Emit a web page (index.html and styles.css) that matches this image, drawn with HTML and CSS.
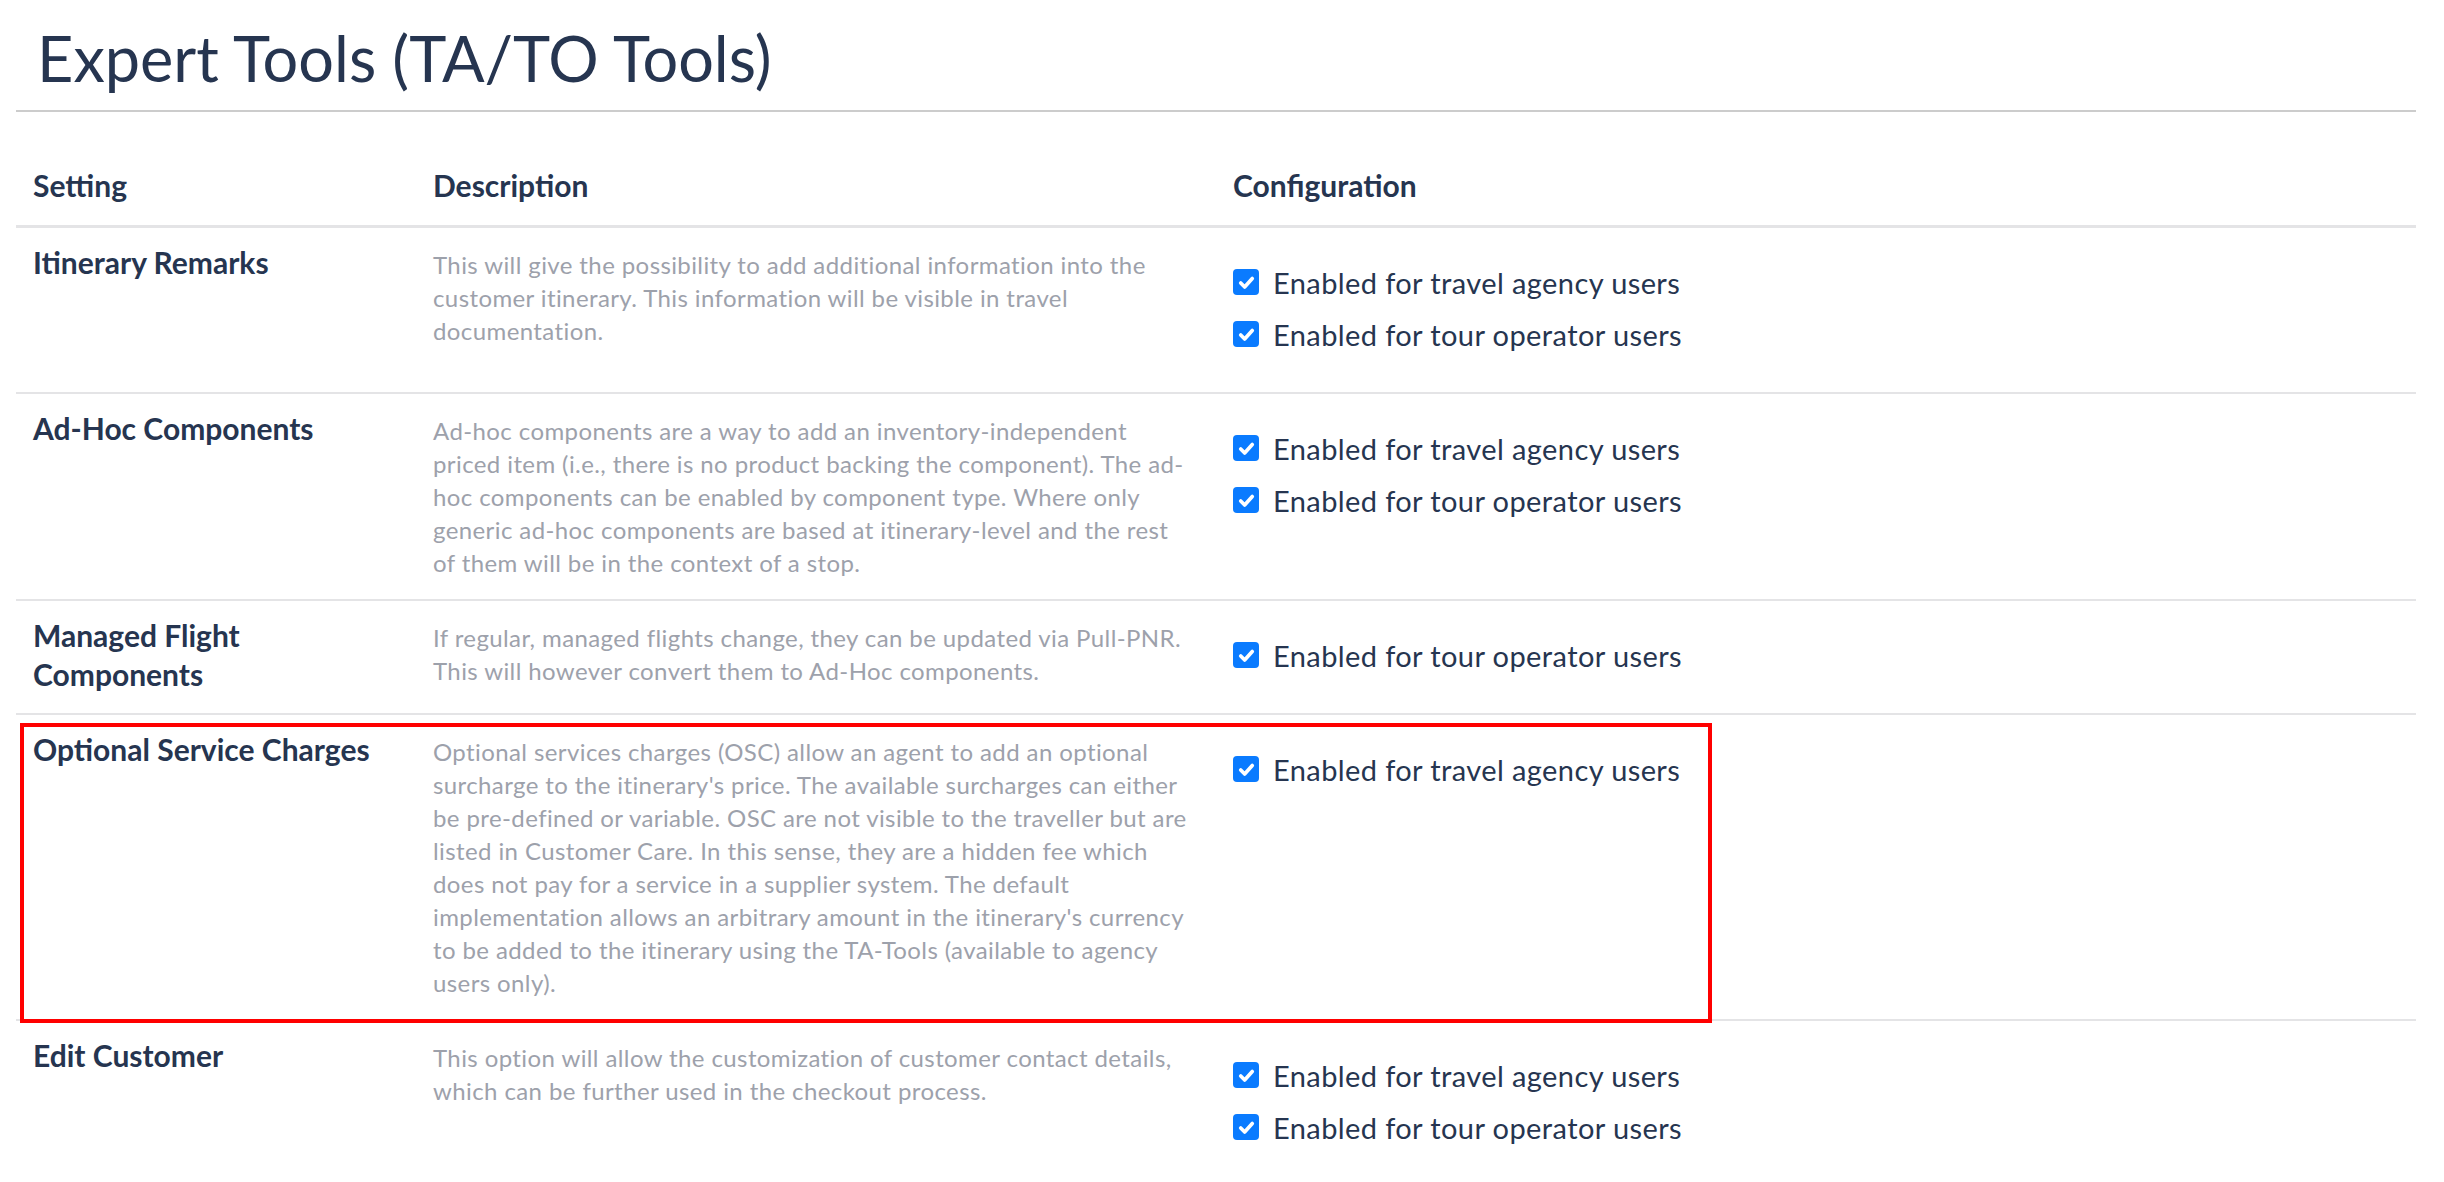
FILE: index.html
```html
<!DOCTYPE html>
<html lang="en">
<head>
<meta charset="utf-8">
<title>Expert Tools (TA/TO Tools)</title>
<link rel="stylesheet" href="styles.css">
</head>
<body>
<div class="page">
  <h1 class="title">Expert Tools (TA/TO Tools)</h1>
  <div class="table">
    <div class="row head">
      <div class="cell">Setting</div>
      <div class="cell">Description</div>
      <div class="cell">Configuration</div>
    </div>

    <div class="row">
      <div class="cell name">Itinerary Remarks</div>
      <div class="cell desc">This will give the possibility to add additional information into the customer itinerary. This information will be visible in travel documentation.</div>
      <div class="cell conf">
        <div class="checks">
          <label class="check"><span class="box"><svg viewBox="0 0 16 16"><path d="M3.6 8.4l3 3 5.8-6.4"/></svg></span>Enabled for travel agency users</label>
          <label class="check"><span class="box"><svg viewBox="0 0 16 16"><path d="M3.6 8.4l3 3 5.8-6.4"/></svg></span>Enabled for tour operator users</label>
        </div>
      </div>
    </div>

    <div class="row">
      <div class="cell name">Ad-Hoc Components</div>
      <div class="cell desc">Ad-hoc components are a way to add an inventory-independent priced item (i.e., there is no product backing the component). The ad-hoc components can be enabled by component type. Where only generic ad-hoc components are based at itinerary-level and the rest<br>of them will be in the context of a stop.</div>
      <div class="cell conf">
        <div class="checks">
          <label class="check"><span class="box"><svg viewBox="0 0 16 16"><path d="M3.6 8.4l3 3 5.8-6.4"/></svg></span>Enabled for travel agency users</label>
          <label class="check"><span class="box"><svg viewBox="0 0 16 16"><path d="M3.6 8.4l3 3 5.8-6.4"/></svg></span>Enabled for tour operator users</label>
        </div>
      </div>
    </div>

    <div class="row">
      <div class="cell name">Managed Flight Components</div>
      <div class="cell desc">If regular, managed flights change, they can be updated via Pull-PNR. This will however convert them to Ad-Hoc components.</div>
      <div class="cell conf">
        <div class="checks">
          <label class="check"><span class="box"><svg viewBox="0 0 16 16"><path d="M3.6 8.4l3 3 5.8-6.4"/></svg></span>Enabled for tour operator users</label>
        </div>
      </div>
    </div>

    <div class="row highlight">
      <div class="cell name">Optional Service Charges</div>
      <div class="cell desc">Optional services charges (OSC) allow an agent to add an optional surcharge to the itinerary's price. The available surcharges can either be pre-defined or variable. OSC are not visible to the traveller but are listed in Customer Care. In this sense, they are a hidden fee which does not pay for a service in a supplier system. The default implementation allows an arbitrary amount in the itinerary's currency to be added to the itinerary using the TA-Tools (available to agency users only).</div>
      <div class="cell conf">
        <div class="checks">
          <label class="check"><span class="box"><svg viewBox="0 0 16 16"><path d="M3.6 8.4l3 3 5.8-6.4"/></svg></span>Enabled for travel agency users</label>
        </div>
      </div>
    </div>

    <div class="row">
      <div class="cell name">Edit Customer</div>
      <div class="cell desc">This option will allow the customization of customer contact details, which can be further used in the checkout process.</div>
      <div class="cell conf">
        <div class="checks">
          <label class="check"><span class="box"><svg viewBox="0 0 16 16"><path d="M3.6 8.4l3 3 5.8-6.4"/></svg></span>Enabled for travel agency users</label>
          <label class="check"><span class="box"><svg viewBox="0 0 16 16"><path d="M3.6 8.4l3 3 5.8-6.4"/></svg></span>Enabled for tour operator users</label>
        </div>
      </div>
    </div>
  </div>
</div>
</body>
</html>
```

FILE: styles.css
```css
* { box-sizing: border-box; }

html, body {
  margin: 0;
  padding: 0;
  background: #ffffff;
}

body {
  font-family: Lato, "Noto Sans", "Liberation Sans", sans-serif;
  color: #263550;
  overflow: hidden;
}

.page {
  padding: 0 28px 0 16px;
}

.title {
  margin: 0;
  padding: 20px 0 14px 21px;
  font-size: 63px;
  line-height: 76px;
  font-weight: 400;
  color: #263550;
  border-bottom: 2px solid #cccccc;
}

.table {
  margin-top: 33px;
}

.row {
  display: grid;
  grid-template-columns: 400px 800px 1200px;
  border-top: 2px solid #e4e4e6;
}

.row.head {
  border-top: none;
  border-bottom: 3px solid #e4e4e6;
}

.row.head + .row {
  border-top: none;
}

.cell {
  padding: 20px 17px;
}

.head .cell {
  font-size: 30px;
  line-height: 40px;
  font-weight: 700;
  color: #263550;
}

.name {
  padding-top: 15px;
  padding-bottom: 0;
  font-size: 30px;
  line-height: 39px;
  font-weight: 700;
  color: #263550;
}

.desc {
  font-size: 24px;
  line-height: 33px;
  letter-spacing: 0.4px;
  color: #9da1ab;
}

.checks {
  padding: 8px 0 12px;
  display: flex;
  flex-direction: column;
}

.check {
  display: flex;
  align-items: center;
  height: 52px;
  font-size: 29px;
  letter-spacing: 0.4px;
  color: #263550;
}

.box {
  flex: none;
  width: 26px;
  height: 26px;
  margin-right: 14px;
  border-radius: 4px;
  background: #0a7bff;
  display: flex;
  align-items: center;
  justify-content: center;
}

.box svg {
  width: 21px;
  height: 21px;
  fill: none;
  stroke: #ffffff;
  stroke-width: 2.8;
  stroke-linecap: round;
  stroke-linejoin: round;
}

.highlight {
  position: relative;
}

.highlight::after {
  content: "";
  position: absolute;
  left: 4px;
  top: 8px;
  width: 1684px;
  height: 292px;
  border: 4px solid #ff0000;
  pointer-events: none;
}
```
